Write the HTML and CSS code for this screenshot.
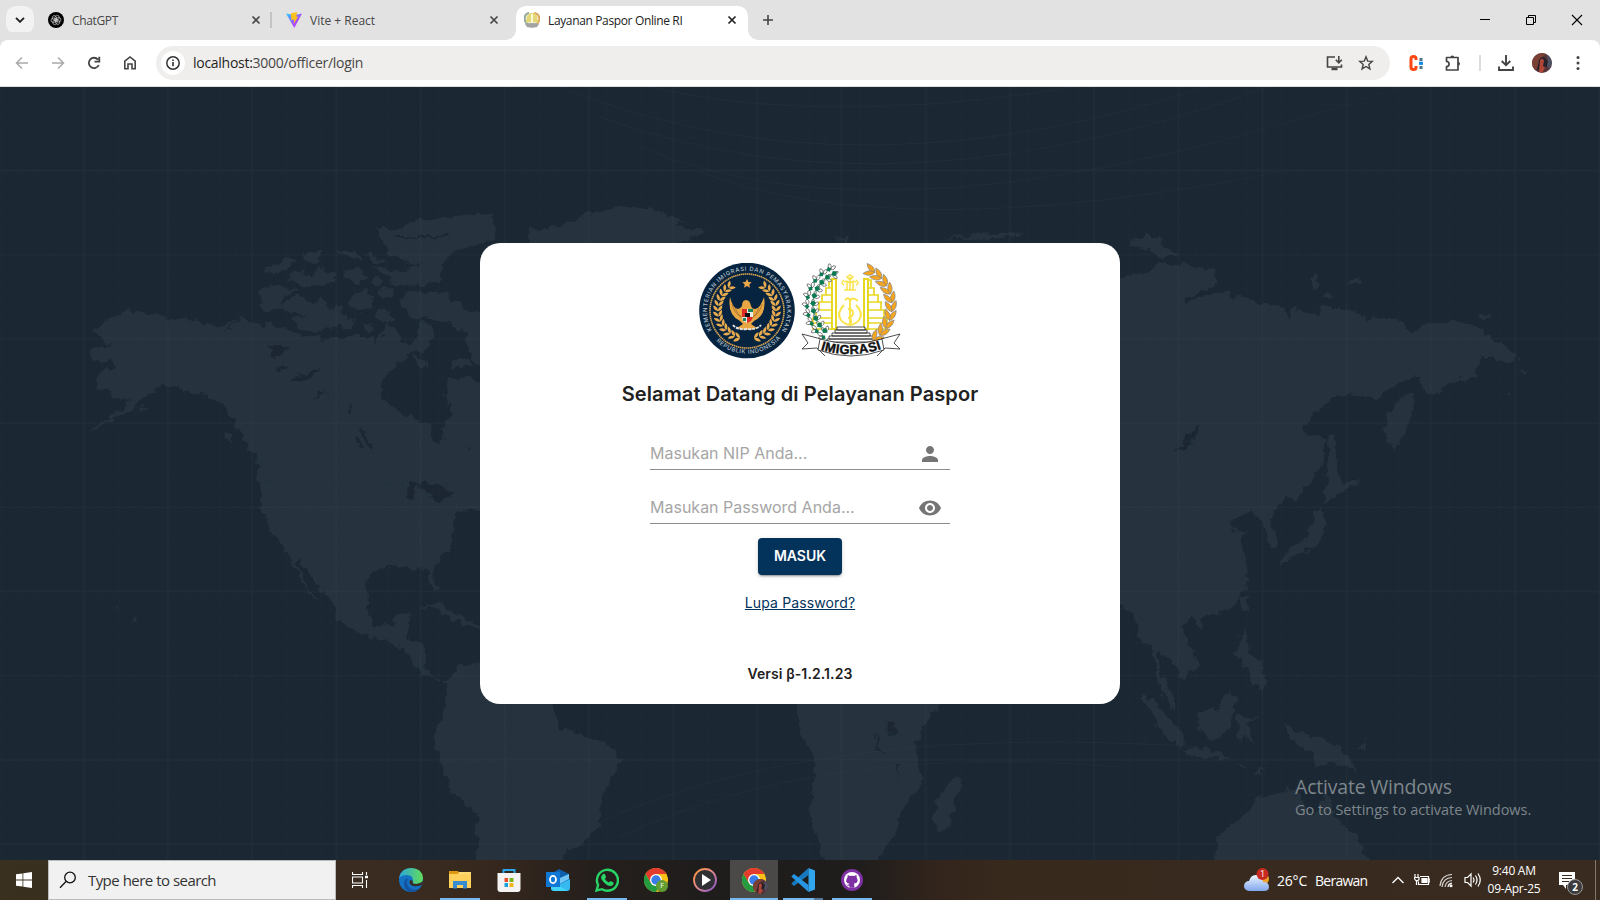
FILE: index.html
```html
<!DOCTYPE html>
<html lang="id">
<head>
<meta charset="utf-8">
<title>Layanan Paspor Online RI</title>
<link rel="stylesheet" href="styles.css">
</head>
<body>
<svg width="0" height="0" class="defs" aria-hidden="true">
  <defs>
    <symbol id="x" viewBox="0 0 10 10"><path d="M1.5 1.5l7 7M8.5 1.5l-7 7" fill="none" stroke="currentColor" stroke-width="1.7"/></symbol>
    <symbol id="chrome" viewBox="0 0 24 24">
      <circle cx="12" cy="12" r="12" fill="#fbc116"/>
      <path d="M1.6 6A12 12 0 0 1 22.4 6H12L6.8 15z" fill="#e33b2e"/>
      <path d="M1.6 6A12 12 0 0 0 12 24L17.2 15 12 17 6.8 15z" fill="#249a41"/>
      <circle cx="12" cy="12" r="6" fill="#fff"/><circle cx="12" cy="12" r="4.7" fill="#3a7de8"/>
    </symbol>
    <symbol id="face" viewBox="0 0 20 20">
      <circle cx="10" cy="10" r="10" fill="#54343a"/>
      <path d="M0 10A10 10 0 0 1 14 1L9 5 5 15 3 17A10 10 0 0 1 0 10z" fill="#7b4034"/>
      <path d="M7 7q2-4 6-2l3 4-1 5-4-1-2 6q-5-1-3-7z" fill="#252229"/>
      <path d="M8 7q3-3 4 1l-1 5 2 2-3 5-3-1z" fill="#b14637"/>
      <path d="M15 2q4 2 5 8l-3 6-2-3 1-5z" fill="#4d5363"/>
    </symbol>
  </defs>
</svg>

<header class="tabs">
  <div class="tab-search"><svg width="10" height="6" viewBox="0 0 10 6"><path d="M1 .8l4 4 4-4" fill="none" stroke="#222" stroke-width="1.9"/></svg></div>
  <div class="tab tab-gpt">
    <svg width="16" height="16" viewBox="0 0 16 16"><circle cx="8" cy="8" r="8" fill="#000"/><g fill="none" stroke="#ddd" stroke-width=".6"><g id="petal"><path d="M7 9V4.600Q8.500 2 11 4V7L8 8.800"/></g><use href="#petal" transform="rotate(60 8 8)"/><use href="#petal" transform="rotate(120 8 8)"/><use href="#petal" transform="rotate(180 8 8)"/><use href="#petal" transform="rotate(240 8 8)"/><use href="#petal" transform="rotate(300 8 8)"/></g></svg>
    <span class="tab-name">ChatGPT</span><svg class="close" width="10" height="10"><use href="#x"/></svg>
  </div>
  <i class="tab-div"></i>
  <div class="tab tab-vite">
    <svg width="16" height="16" viewBox="0 0 16 16"><defs><linearGradient id="vg" x2="1" y2="1"><stop stop-color="#27cfff"/><stop offset=".6" stop-color="#a94dff"/><stop offset="1" stop-color="#c03cff"/></linearGradient></defs><path d="M0 1.5L8 3l8-1.5L8.3 16z" fill="url(#vg)"/><path d="M5 1.2L11.3 0 10 4.8l2.2-.4L7.7 12l.4-4.6-2.8.5z" fill="#ffc01c"/></svg>
    <span class="tab-name">Vite + React</span><svg class="close" width="10" height="10"><use href="#x"/></svg>
  </div>
  <div class="tab tab-active">
    <svg width="16" height="16" viewBox="0 0 16 16"><path d="M5 1Q0 2 .8 8q.6 3.500 4 5" fill="none" stroke="#8fa99b" stroke-width="2"/><path d="M10 1q6 1 5.200 7-.6 3.500-4 5" fill="none" stroke="#dba85c" stroke-width="2"/><path d="M1.800 10.500l1-6.500L6 1h4l3.200 3 1 6.500z" fill="#e3d778"/><path d="M7 2h2v9H7z" fill="#fbf8d8"/><path d="M1 12q7-2 14 0l-2 3q-5 1.500-10 0z" fill="#a3a3a3"/></svg>
    <span class="tab-name">Layanan Paspor Online RI</span><svg class="close" width="10" height="10"><use href="#x"/></svg>
  </div>
  <svg class="plus" width="12" height="12" viewBox="0 0 12 12"><path d="M6 1v10M1 6h10" stroke="#444" stroke-width="1.6"/></svg>
  <div class="winctl">
    <svg width="12" height="12" viewBox="0 0 12 12"><path d="M1 5.500h10" stroke="#000"/></svg>
    <svg width="12" height="12" viewBox="0 0 12 12" fill="none" stroke="#000"><path d="M1.500 3.500h7v7h-7zM3.500 3.500v-2h7v7h-2"/></svg>
    <svg width="12" height="12" viewBox="0 0 12 12"><path d="M1 1l10 10M11 1L1 11" stroke="#000" stroke-width="1.100"/></svg>
  </div>
</header>

<nav class="toolbar">
  <div class="navs">
    <svg width="16" height="16" viewBox="0 0 16 16" fill="none" stroke="#a9a9a9" stroke-width="1.500"><path d="M14 8H3M8 2.500L2.500 8 8 13.500"/></svg>
    <svg width="16" height="16" viewBox="0 0 16 16" fill="none" stroke="#a9a9a9" stroke-width="1.500"><path d="M2 8h11M8 2.500L13.500 8 8 13.500"/></svg>
    <svg width="16" height="16" viewBox="0 0 16 16" fill="none" stroke="#444" stroke-width="1.800"><path d="M12.800 10A5.200 5.200 0 1 1 12 4.600M13.300 1.800V6.600H8.500"/></svg>
    <svg width="16" height="16" viewBox="0 0 16 16" fill="none" stroke="#444" stroke-width="1.600"><path d="M2.800 13.700V6.200L8 2l5.200 4.200v7.500H10V9H6v4.700z"/></svg>
  </div>
  <div class="omni">
    <div class="info"><svg width="16" height="16" viewBox="0 0 16 16"><circle cx="8" cy="8" r="6.200" fill="none" stroke="#333" stroke-width="1.500"/><path d="M8 7v4.200M8 4.600v1.500" stroke="#333" stroke-width="1.600"/></svg></div>
    <span class="url"><b>localhost:</b>3000/officer/login</span>
    <svg width="17" height="16" viewBox="0 0 17 16" fill="none" stroke="#444" stroke-width="1.600"><path d="M9 2H1.500v10h14V9.500M12.800 1v6M9.800 4.800l3 3 3-3"/><path d="M5.500 14h6" stroke-width="2.400"/></svg>
    <svg class="star" width="16" height="16" viewBox="0 0 16 16"><path d="M8 1.800l1.700 4.300 4.600.3-3.500 3 1.100 4.500L8 11.500l-3.900 2.400 1.100-4.500-3.500-3 4.600-.3z" fill="none" stroke="#444" stroke-width="1.400"/></svg>
  </div>
  <div class="exts">
    <svg width="16" height="18" viewBox="0 0 16 18"><path d="M8 6V4.500Q8 2.500 5.500 2.500T3 5v8q0 2.500 2.500 2.500T8 13.500V12" fill="none" stroke="#ff4713" stroke-width="3"/><path d="M13 4v3M13 12v3" stroke="#55708a" stroke-width="3"/><path d="M13 7.700v3.200" stroke="#188ce5" stroke-width="4"/></svg>
    <svg class="puzzle" width="18" height="18" viewBox="0 0 18 18"><path d="M2.500 3.500H14V16H2.500V12.500a2.600 2.600 0 0 0 0-5.200z" fill="none" stroke="#444" stroke-width="1.700" stroke-linejoin="round"/><path d="M6.300 3.500a2 2 0 0 1 4 0zM14 7.800a2 2 0 0 1 0 4z" fill="#444"/></svg>
    <i></i>
    <svg class="dl" width="18" height="18" viewBox="0 0 18 18" fill="none" stroke="#444" stroke-width="1.900"><path d="M9 1v10M4.700 7L9 11.200 13.300 7M2 12.500V16h14v-3.500"/></svg>
    <svg class="ava" width="20" height="20"><use href="#face"/></svg>
    <svg width="4" height="16" viewBox="0 0 4 16" fill="#444"><circle cx="2" cy="2.500" r="1.500"/><circle cx="2" cy="8" r="1.500"/><circle cx="2" cy="13.500" r="1.500"/></svg>
  </div>
</nav>

<main class="page">
  <svg class="map" width="1600" height="773" viewBox="0 0 1600 773">
    <defs>
      <filter id="coast" filterUnits="userSpaceOnUse" x="0" y="0" width="1600" height="773"><feTurbulence type="fractalNoise" baseFrequency=".11" numOctaves="3" seed="4"/><feDisplacementMap in="SourceGraphic" scale="11" xChannelSelector="R" yChannelSelector="G"/></filter>
      <pattern id="minor" width="16.840" height="16.840" patternUnits="userSpaceOnUse"><path d="M0 .5H17M.5 0V17" stroke="#22384a" stroke-opacity=".12"/></pattern>
      <pattern id="major" width="84.200" height="84.200" patternUnits="userSpaceOnUse"><path d="M0 83.500H85M83.500 0V85" stroke="#4d6a70" stroke-opacity=".12"/></pattern>
    </defs>
    <g filter="url(#coast)">
    <g class="land" transform="scale(.5102 .493)">
      <path d="M500 740H960V850L890 868 884 935 850 965 848 985 858 1022 850 1022 836 978 790 972 740 978 720 1000 722 1070 735 1096 770 1090 776 1070 804 1066 796 1120 832 1132 834 1180 852 1205 876 1205 900 1176 940 1166 1080 1240 1096 1300 1140 1312 1190 1332 1215 1366 1205 1395 1182 1430 1176 1490 1155 1525 1110 1550 1100 1575H934L936 1475 890 1435 868 1380 850 1335 856 1300 876 1250 878 1215 850 1198 824 1190 808 1155 760 1122 730 1120 660 1085 656 1050 625 1015 588 955 582 965 600 1010 622 1046 614 1042 590 1000 566 945 530 905 514 860z"/>
      <path d="M826 1056l30-10 30 20 40 20 80 20-30 4-70-20-54-32zM228 1056l5 2-2 3zM258 1078l8 5-5 6zM1562 1250l40-30v120zM1040 292l60-10 50-26 60-12 70 4 60 22-20 12 70 8-40 20-90 30-60 40-160-20z"/>
      <path class="sea" d="M768 780l30-20 16 16 34 12 16 24 28 8-34 22-24-24-22-10-6 34-8-2 4-40z"/>
    </g>
    <g class="land" transform="translate(80 113) scale(.3333)">
      <path d="M90 355L150 333 260 350 360 362 408 388 440 370 495 342 520 365 545 378 570 368 640 395 665 410 720 405 735 430 745 405 800 412 880 410 885 432 895 415 920 375 950 385 965 425 1000 430 1020 370 1060 370 1060 420 1040 445 1000 460 960 490 920 530 900 560 905 595 935 620 980 645 1020 668 1050 670 1055 720 1078 742 1090 720 1085 680 1115 650 1110 610 1095 590 1105 540 1160 530 1240 560V850H545L540 790 500 740 480 690 440 630 400 600 350 575 300 570 255 550 235 560 215 585 180 600 150 630 100 655 60 682 10 705 50 680 90 650 130 630 145 600 100 590 85 570 55 565 40 540 60 515 100 500 95 480 40 480 20 455 45 445 65 435 100 438 60 420 40 395z"/>
      <path d="M550 215L580 190 630 172 650 180 620 210 580 225zM545 265L590 255 650 270 610 295 600 325 560 335 540 315zM600 320L650 285 680 290 690 305 720 290 745 320 775 315 790 345 825 365 815 385 760 380 720 395 650 385 630 355 690 350 630 340zM625 240L645 215 700 225 720 195 740 215 765 220 765 245 680 260zM670 165L720 152 720 175 695 195 675 190zM765 148L830 155 850 180 800 170zM860 155L920 185 900 190 865 175zM785 210L850 205 870 240 830 250 795 235zM810 290L850 265 880 290 875 320 845 335 815 315zM890 265H930L945 285 920 300 890 290zM890 320L940 350 925 375 885 355zM850 370L880 370 880 395 855 390zM885 195L960 215 1030 190 1090 205 1080 245 1020 258 940 255 930 225 890 215zM885 230L910 235 905 255 885 250zM890 90H930L1020 60 1240 40V120L1150 145 1100 170 1090 205 1010 190 930 165 905 120zM960 300L990 275 1110 270 1120 300 1160 330 1240 350V520L1170 480 1160 400 1080 355 1010 360 970 330zM1105 485L1150 470 1180 500 1110 505zM1000 470L1040 485 1050 505 1010 500zM438 695L455 705 460 725 440 715zM500 745L545 765 565 805 550 800 530 770 500 758zM175 620L205 612 190 630z"/>
      <path class="sea" d="M555 438L600 430 625 450 600 470 565 472 580 450zM625 545L665 530 655 510 680 525 720 505 690 540 650 552zM700 605L720 580 745 578zM805 605L812 630 800 640zM825 705L858 750 835 735zM845 685L880 745 875 752 850 710zM590 500H620L610 508zM1155 750L1170 738 1165 750zM940 105H1110V112H940zM435 390L480 352 450 385z"/>
    </g>
    <g class="land" transform="translate(800) scale(.5102 .493)">
      <path d="M600 388L680 378 700 360 750 356 814 372 816 400 760 428 755 435 822 416 888 434 948 448 955 472 968 448 1018 466 1018 444 1060 444 1110 468 1170 466 1200 496 1230 478 1290 476 1340 494 1370 520 1408 546 1400 566 1340 545 1325 560 1328 590 1310 588 1256 610 1254 622 1225 618 1212 588 1180 600 1130 632 1080 626 1044 630 1014 656 986 694 1000 708 1030 712 1024 760 990 816 970 838 950 830 935 856 920 880 935 910 932 930 918 932 915 900 902 872 880 862 846 884 855 902 880 906 862 920 874 954 878 1000 860 1046 820 1070 790 1074 785 1105 765 1075 752 1095 752 1115 774 1140 780 1175 746 1200 740 1180 716 1150 702 1145 702 1175 716 1205 735 1238 736 1270 714 1240 702 1200 690 1130 665 1125 660 1085 635 1058 600 1040z"/>
      <path d="M644 320l30-24 34 14 4 18 34 12-36 8-22-14zM1002 386l10-6 10 22-12 10zM1022 424l14-10 12 14-14 4zM1076 392l20-6 8 12-20 4zM1330 464l14-6 12 8-20 6zM1180 628l18-10 6 42-40 80-20-40 10-40zM1036 706l12-4 4 60 8 40 40-6-60 40-16 10 10-50zM1018 850l14 30-12 46-38 20-38 22 6-26 40-20 18-50zM864 1058l4-24 10-4-6 30zM862 1110l12-10 4 50 28 12 6 60-26-10-10-30-20-30zM668 1230l26 12 26 34 30 30v36l-30-20-30-50zM750 1342l60 2 40 20-90-8zM776 1270l40-10 24-42 14 20-8 50-30 40-28-12zM856 1274l16 6 24-6-22 18 18 46-20-22-8 16zM950 1296l24 12 30 6 56 26 38 52-28-14-30-6-30 6-10-30-40-28zM1090 1344l20-20-2 20zM856 1372l20 6-14 2zM886 1396l30-22-10 18zM815 1575L817 1520 867 1480 897 1444 937 1430 977 1420 990 1460 1010 1480 1030 1425 1050 1480 1090 1520 1114 1575zM-10 1230H290L240 1300 228 1330 238 1420 200 1460 192 1500 150 1575H50L20 1470 30 1360 0 1310zM306 1396l10 14-26 90-20 8-10-30 12-40 20-20zM1400 574l20 8-4 4zM1388 618l8 2-6 4zM60 310l40-4-10 8zM260 306l60-2 20-8 40 2 60-4-20 10-60 6z"/>
      <path class="sea" d="M736 738l24-28 22-28-4 24-26 28zM170 1286h20v24h-20zM150 1300l4 40 14 20-18-14zM190 1370l4 36-6-30z"/>
    </g>
    </g>
    <rect width="1600" height="773" fill="url(#minor)"/><rect width="1600" height="773" fill="url(#major)"/>
    <g class="waves"><path d="M560 0Q860 120 1230 -8M600 30Q900 140 1290 -8M640 60Q900 170 1400 0M700 85Q900 160 1280 85M610 -10Q820 50 1130 -10M600 735Q820 635 1200 660M620 750Q820 655 1120 680"/></g>
  </svg>

  <section class="card">
    <div class="logos">
      <svg width="96" height="96" viewBox="0 0 96 96">
        <defs><path id="arcTop" d="M13.500 68A40 40 0 1 1 82.500 68"/><path id="arcBot" d="M12 72A44 44 0 0 0 84 72"/></defs>
        <circle cx="48" cy="47.500" r="47.800" fill="#06233f"/>
        <text class="seal"><textPath href="#arcTop" textLength="166" startOffset="1">KEMENTERIAN IMIGRASI DAN PEMASYARAKATAN</textPath></text>
        <text class="seal"><textPath href="#arcBot" textLength="72" startOffset="8">REPUBLIK INDONESIA</textPath></text>
        <circle cx="48" cy="48" r="37" fill="none" stroke="#d8a552" stroke-width="1.600" stroke-dasharray="1.500 .5"/>
        <g id="wreath" fill="#e9ab4f"></g>
        <path d="M48 16l1.500 3 3.200.3-2.400 2.200.7 3.200L48 23l-3 1.700.7-3.200-2.400-2.200 3.200-.3z" fill="#eca84a"/>
        <path d="M31 34q-3 18 10 24l3 3-6 4q10 4 20 0l-6-4 3-3q13-6 10-24-4 12-9 12-3 0-4-3-1-6-5-6t-4 6q-2 3-4 3-5 0-8-12z" fill="#e9a744"/>
        <path d="M33 41q2 9 9 13M36 45q3 8 8 10M63 41q-2 9-9 13M60 45q-3 8-8 10" fill="none" stroke="#8d5c22" stroke-width=".6"/>
        <path d="M43 46h5v8h-5zM48 54h6l-2 4-4 2z" fill="#dc2c28"/><path d="M48 46h6v8h-6zM43 54h5v6l-4-2z" fill="#e8eee7"/><path d="M49 46h5v3h-5zM44 55h3v3h-3z" fill="#17835a"/><path d="M46 50h5v4h-5z" fill="#111"/>
        <path d="M34 62q4 5 14 4 10 1 14-4" fill="none" stroke="#e4e4e4" stroke-width="2" stroke-dasharray="3 1"/>
      </svg>
      <svg width="100" height="94" viewBox="0 0 100 94">
        <g fill="none" stroke="#e8d722" stroke-width="2"><path d="M31 16h4v50h-4zM63 16h4v50h-4z"/><path d="M31 17h-3v8h-3v7h-4v7h-3v8h-3v8h-3v11h20M67 17h3v8h3v7h4v7h3v8h3v8h3v11H67M25 25h7M21 32h11M18 39h14M15 47h17M14 55h18M13 60h18M67 25h7M67 32h11M67 39h14M67 47h17M67 55h18M67 60h18" stroke-width="1.700"/></g>
        <g fill="none" stroke="#fae34c" stroke-width="1.500"><path d="M49 14v13M46 18v9M52 18v9M43 27h12M49 20q-3-3-6-1M49 20q3-3 6-1M43 17q-4 3 0 5M55 17q4 3 0 5M46 14l3-2 3 2-3 3z"/><path d="M43 42q-8 8-3 15 3 4 9 5 6-1 9-5 5-7-3-15M49 38v24M44 37q4-4 5 1 2-5 8 0M47 46q5 0 5 4t-5 5q4 0 3 5" stroke-width="2"/></g>
        <g fill="#fff" stroke="#222" stroke-width=".8"><path d="M36 64h28v3H36zM34 67h32v3H34zM31 70h38v3H31zM28 73h44v3H28zM26 76h48v3H26z"/></g>
        <g id="cotton"></g><g id="rice"></g>
        <g fill="#fff" stroke="#222" stroke-width=".8"><path d="M20 76L1 71l6 9-6 6 15-1 8 8M80 76l19-5-6 9 6 6-15-1-8 8"/><path d="M19 76q31 9 62 0l2 11q-33 12-66 0z"/></g>
        <path id="ribbon" d="M18.500 86.500q31 10 63-1" fill="none"/>
        <text class="ribbon-text"><textPath href="#ribbon" textLength="62" startOffset="1">IMIGRASI</textPath></text>
      </svg>
    </div>
    <h1>Selamat Datang di Pelayanan Paspor</h1>
    <div class="field"><span>Masukan NIP Anda...</span><svg width="24" height="24" viewBox="0 0 24 24" fill="#757575"><path d="M12 12c2.210 0 4-1.790 4-4s-1.790-4-4-4-4 1.790-4 4 1.790 4 4 4m0 2c-2.670 0-8 1.340-8 4v2h16v-2c0-2.660-5.330-4-8-4"/></svg></div>
    <div class="field second"><span>Masukan Password Anda...</span><svg width="24" height="24" viewBox="0 0 24 24" fill="#757575"><path d="M12 4.500C7 4.500 2.730 7.610 1 12c1.730 4.390 6 7.500 11 7.500s9.270-3.110 11-7.500c-1.730-4.390-6-7.500-11-7.500M12 17c-2.760 0-5-2.240-5-5s2.240-5 5-5 5 2.240 5 5-2.240 5-5 5m0-8c-1.660 0-3 1.340-3 3s1.340 3 3 3 3-1.340 3-3-1.340-3-3-3"/></svg></div>
    <button class="login">MASUK</button>
    <a class="forgot">Lupa Password?</a>
    <p class="version">Versi β-1.2.1.23</p>
  </section>
  <div class="activate"><div class="act1">Activate Windows</div><div class="act2">Go to Settings to activate Windows.</div></div>
</main>

<footer class="taskbar">
  <div class="start"><svg width="16" height="16" viewBox="0 0 16 16" fill="#fff"><path d="M0 2.300L6.500 1.400v6.200H0zM7.300 1.300L16 0v7.600H7.300zM0 8.400h6.500v6.200L0 13.700zM7.300 8.400H16V16l-8.700-1.300z"/></svg></div>
  <div class="search"><svg width="18" height="18" viewBox="0 0 18 18" fill="none" stroke="#111" stroke-width="1.300"><circle cx="11" cy="6.500" r="5.300"/><path d="M7 10.500L1 16.700"/></svg><span>Type here to search</span></div>
  <div class="taskview"><svg width="16" height="16" viewBox="0 0 16 16" fill="none" stroke="#fff" stroke-width="1.100"><path d="M.5 0v2.500h10V0M.5 16v-2.500h10V16M.5 5h10v6H.5zM14.500 0v3M14.500 8v8"/><path d="M13 5h3" stroke-width="2.500"/></svg></div>
  <div class="apps">
    <div class="app"><svg width="24" height="24" viewBox="0 0 24 24"><defs><linearGradient id="e1" x2="1"><stop stop-color="#2aa5dc"/><stop offset="1" stop-color="#62dd59"/></linearGradient></defs><circle cx="12" cy="12" r="12" fill="#1472c4"/><path d="M0 10Q2 0 12 0q11 0 12 10 0 6-7 6-5 0-3-3Q14 7 8 7 3 7 0 10z" fill="url(#e1)"/><path d="M9 10q-3 7 3 11 6 2 10-2-5 5-10 5Q4 22 5 14q1-3 4-4z" fill="#1452a2"/><path d="M14 13q-2 3 3 3 4 0 7-3l-1 4q-6 2-9 1-5-2-3-6z" fill="#3a2c21"/></svg></div>
    <div class="app run"><svg width="24" height="24" viewBox="0 0 24 24"><path d="M1 3h9l2 3H1z" fill="#dd9911"/><path d="M1 6h22v14H1z" fill="#ffd15c"/><path d="M11 4h12v2H10z" fill="#ffdb77"/><path d="M5 20.500V13h14v7.500h-4V17H9v3.500z" fill="#378bd0"/></svg></div>
    <div class="app"><svg width="24" height="24" viewBox="0 0 24 24"><path d="M6.500 6V2h11v4" fill="none" stroke="#28a7ec" stroke-width="2"/><path d="M.5 5h23v16q0 3-3 3h-17q-3 0-3-3z" fill="#f3f3f3"/><path d="M7.500 10H11v4H7.500z" fill="#e74b2b"/><path d="M12.500 10h4v4h-4z" fill="#7eb41f"/><path d="M7.500 15H11v4H7.500z" fill="#18a0dd"/><path d="M12.500 15h4v4h-4z" fill="#f3b51e"/></svg></div>
    <div class="app"><svg width="24" height="24" viewBox="0 0 24 24"><path d="M5 6l8-5 10 5v16H5z" fill="#0e60ad"/><path d="M14 10l9-4v5L12 17z" fill="#6fc5f5"/><path d="M5 21l19-10v9q0 3-3 3H8z" fill="#35b9ef"/><path d="M5 13l17 10H8q-3 0-3-3z" fill="#43d4fa"/><path d="M0 4h14v15H0z" fill="#0f78d4"/><ellipse cx="7" cy="11.500" rx="3" ry="3.600" fill="none" stroke="#fff" stroke-width="1.800"/></svg></div>
    <div class="app run"><svg width="24" height="24" viewBox="0 0 24 24"><path d="M1.500 22.500l1.600-5.500A10.500 10.500 0 1 1 7 21.200z" fill="none" stroke="#28d366" stroke-width="2.400"/><path d="M8 6q2-1 2.700 2l.3 1.500-1.200 1.500q2 3 4.200 3.500l1.500-1.600 3 1.600q.5 2.500-2.500 3.500-3 .5-7-3.500T6.500 8z" fill="#28d366"/></svg></div>
    <div class="app"><svg width="24" height="24"><use href="#chrome"/></svg><b class="green">F</b></div>
    <div class="app"><svg width="24" height="24" viewBox="0 0 24 24"><defs><linearGradient id="m" x2="1" y2="1"><stop stop-color="#ff9838"/><stop offset=".5" stop-color="#df8790"/><stop offset="1" stop-color="#8554cf"/></linearGradient></defs><circle cx="12" cy="12" r="11" fill="#303034" stroke="url(#m)" stroke-width="1.800"/><path d="M9 6l9 6-9 6z" fill="#fff"/></svg></div>
    <div class="app run active"><svg width="24" height="24"><use href="#chrome"/></svg><svg class="mini" width="15" height="15"><use href="#face"/></svg></div>
    <div class="app run multi"><svg width="24" height="24" viewBox="0 0 24 24"><path d="M17.500 0v7L3 18 .3 15.500z" fill="#1679c0"/><path d="M17.500 24v-7L3 6 .3 8.500z" fill="#2696e2"/><path d="M17.500 0L24 2.500v19L17.500 24z" fill="#2fa6ee"/></svg></div>
    <div class="app run"><svg width="24" height="24" viewBox="0 0 24 24"><circle cx="12" cy="12" r="11" fill="#7e31a2"/><circle cx="12" cy="12" r="8" fill="#fff"/><path d="M7.800 7l2 1q2-.5 4.500 0l2-1q.6 1 .3 2.200 3 5.500-2.600 6.400l.5 4.200h-5v-2q-2.300.4-3-1.600l1.500.7 1.500-1.200Q4 15 7.500 9.200z" fill="#7e31a2"/></svg></div>
  </div>
  <div class="weather"><svg width="26" height="26" viewBox="0 0 26 26"><defs><linearGradient id="cl" x2="0" y2="1"><stop stop-color="#eef5ff"/><stop offset="1" stop-color="#81a7ed"/></linearGradient></defs><circle cx="19" cy="12" r="6" fill="#efa22b"/><path d="M5 24a5 5 0 0 1 0-10Q7 7 13 8q6 1 6 7 6 0 6 5 0 4-5 4z" fill="url(#cl)"/><circle cx="18.500" cy="7" r="6" fill="#c72a20"/></svg><b>1</b><span>26°C</span><span class="sky">Berawan</span></div>
  <div class="tray">
    <svg width="14" height="16" viewBox="0 0 14 16"><path d="M1.500 11L7 5.500l5.500 5.500" fill="none" stroke="#fff" stroke-width="1.300"/></svg>
    <svg width="16" height="16" viewBox="0 0 16 16" fill="none" stroke="#fff" stroke-width="1.200"><path d="M6 4.500h8.500v8H4.500v-3M14.500 7H16v3h-1.500M1 2v3M4 2v3M0 5.500h5v2q-2.500 3-4 0zM2.500 8v5"/><path d="M8 6.500h5v4H8z" fill="#fff"/></svg>
    <svg width="16" height="16" viewBox="0 0 16 16" fill="none" stroke="#fff" stroke-width="1.200"><path d="M3 15Q4 6 13 5.500M6 15q1-6 7-6.500M1 14Q2 3 13 2.500" opacity=".8"/><path d="M9 15q.5-3.500 4-3.800"/><circle cx="12" cy="13.800" r="1.500" fill="#fff" stroke="none"/></svg>
    <svg width="18" height="16" viewBox="0 0 18 16" fill="none" stroke="#fff" stroke-width="1.200"><path d="M1 5.500h2.500L7 2v12l-3.500-3.500H1zM9 5.500q2 2.500 0 5M11.500 3.500q3 4.500 0 9M14 1.500q4.500 6.500 0 13"/></svg>
  </div>
  <div class="clock"><div class="time">9:40 AM</div><div class="date">09-Apr-25</div></div>
  <div class="notif"><svg width="17" height="17" viewBox="0 0 17 17"><path d="M0 0h16v13H7v4l-3-4H0z" fill="#fff"/><path d="M3 3.500h10M3 6.500h10M3 9.500h7" stroke="#3a2c21" stroke-width="1.100"/></svg><b>2</b></div>
  <i class="peek"></i>
</footer>
<script src="emblems.js"></script>
</body>
</html>
```

FILE: styles.css
```css
*{box-sizing:border-box}
body{margin:0;width:1600px;height:900px;overflow:hidden;display:flex;flex-direction:column;font-family:"Open Sans","Noto Sans",sans-serif;background:#fff}
svg{display:block;flex:none}
.defs{position:absolute}
.tabs{height:40px;background:#e2e2e2;display:flex;align-items:flex-start;padding:6px 0 0 6px;flex:none}
.tab-search{width:28px;height:28px;border-radius:10px;background:#f2f2f2;display:flex;align-items:center;justify-content:center}
.tab{display:flex;align-items:center;height:28px;font-size:12px;letter-spacing:-.36px;color:#474747}
.tab-name{flex:1;margin-left:8px;white-space:nowrap}
.tab-gpt{width:213px;margin-left:14px}
.tab-div{width:2px;height:16px;background:#c4c4c4;margin:6px 0 0 9px}
.tab-vite{width:213px;margin-left:14px;letter-spacing:0}
.tab-active{width:232px;height:34px;background:#fff;border-radius:10px 10px 0 0;margin-left:17px;padding:0 11px 6px 8px;color:#222;position:relative}
.tab-active::before,.tab-active::after{content:"";position:absolute;bottom:0;width:10px;height:10px}
.tab-active::before{left:-10px;background:radial-gradient(circle at 0 0,#e2e2e2 9.5px,#fff 10px)}
.tab-active::after{right:-10px;background:radial-gradient(circle at 10px 0,#e2e2e2 9.500px,#fff 10px)}
.plus{margin:8px 0 0 14px}
.winctl{display:flex;gap:34px;margin:8px 17px 0 auto}
.toolbar{height:47px;flex:none;background:#fff;border-bottom:1px solid #dedede;border-radius:8px 8px 0 0;box-shadow:0 -8px 0 #e2e2e2;display:flex;align-items:center;padding-left:14px}
.navs{display:flex;gap:20px}
.omni{display:flex;align-items:center;width:1234px;height:34px;margin-left:18px;border-radius:17px;background:#efeeec;padding:0 16px 0 5px}
.info{width:24px;height:24px;border-radius:50%;background:#fff;display:flex;align-items:center;justify-content:center}
.url{font-size:14px;letter-spacing:-.28px;color:#474747;flex:1;margin:-1px 0 0 8px}
.url b{font-weight:400;color:#1f1f1f}
.star{margin-left:15px}
.exts{display:flex;align-items:center;margin-left:18px}
.exts i{width:2px;height:16px;background:#dcdcdc;margin-left:17px}
.puzzle{margin-left:20px}.dl{margin-left:16px}.ava{margin:0 24px 0 17px}
.page{position:relative;height:773px;flex:none;background:#1b2732;display:flex;justify-content:center;align-items:flex-start}
.map{position:absolute;left:0;top:0}
.land path{fill:#25323d}.land .sea{fill:#1b2732}
.waves path{fill:none;stroke:#2f5261;stroke-opacity:.16}
.card{position:relative;width:640px;height:461px;margin-top:156px;border-radius:20px;background:#fff;display:flex;flex-direction:column;align-items:center;font-family:Inter,sans-serif;padding-top:20px;color:#212121}
.logos{display:flex;gap:6px;height:96px}
.seal{font:500 5.800px Inter,sans-serif;fill:#b5c0ca}
.ribbon-text{font:900 13px "Liberation Sans",sans-serif;fill:#111;stroke:#111;stroke-width:.4}
h1{margin:19px 0 0;font-size:20px;line-height:32px;font-weight:600;letter-spacing:.1px;white-space:nowrap}
.field{width:300px;height:32px;margin-top:28px;border-bottom:1px solid #8d8d8d;display:flex;justify-content:space-between;align-items:center;padding:0 8px 1px 0;font-size:16px;color:#a6a6a6}
.field svg{margin-top:2px}
.second{margin-top:22px}
.login{width:84px;height:37px;margin:14px 0 0;border:0;border-radius:4px;background:#03335a;color:#fff;font:600 14px/24px Inter,sans-serif;box-shadow:0 3px 1px -2px rgba(0,0,0,.2),0 2px 2px rgba(0,0,0,.14),0 1px 5px rgba(0,0,0,.12);padding:0 0 1px}
.forgot{margin-top:17px;font-size:14px;line-height:22px;letter-spacing:.12px;color:#03335a;text-decoration:underline}
.version{margin:49px 0 0;font-size:14px;line-height:22px;font-weight:600;letter-spacing:.1px}
.activate{position:absolute;left:1295px;top:687px;color:#7d868c;white-space:nowrap}
.act1{font-size:19.500px;line-height:26px;letter-spacing:-.2px}
.act2{font-size:14.500px;line-height:20px;letter-spacing:-.04px}
.taskbar{height:40px;flex:none;display:flex;color:#fff;background:linear-gradient(90deg,#39301f 0,#3a2b20 430px,#35271d 500px,#251f1c 590px,#1f1d1c 700px,#1f1d1c 860px,#33251c 940px,#38291d 1000px,#392b20)}
.start{width:48px;display:flex;align-items:center;justify-content:center}
.search{width:288px;background:#f1f1f1;border:1px solid #bbb;color:#333;display:flex;align-items:center;font-size:15px}
.search svg{margin:0 11px 0 10px}
.search span{letter-spacing:-.58px;word-spacing:.3px}
.taskview{width:51px;padding:12px 0 0 16px}
.apps{display:flex;gap:1px}
.app{position:relative;width:48px;height:40px;display:flex;align-items:center;justify-content:center}
.run::after{content:"";position:absolute;left:4px;right:4px;bottom:0;height:2px;background:#77b8ef}
.active{background:#4b4948}.active::after{left:0;right:0}
.multi::after{background:linear-gradient(90deg,#77b8ef 31px,#54799d 31px)}
.green{position:absolute;left:24px;top:20px;width:12px;height:12px;border-radius:50%;background:#629c32;font-size:7px;line-height:12px;text-align:center;font-weight:400}
.mini{position:absolute;left:23px;top:19px}
.weather{position:relative;display:flex;align-items:center;margin-left:368px;font-size:14px;letter-spacing:-.2px;white-space:nowrap}
.weather b{position:absolute;left:16px;top:8px;font-size:9px;line-height:12px;font-weight:400}
.weather span{margin-left:7px}.weather .sky{margin-left:8px;letter-spacing:-.75px}
.tray{position:absolute;left:1391px;top:872px;display:flex;gap:9px}
.clock{position:absolute;left:1480px;top:862px;width:68px;text-align:center;font-size:12px;line-height:18px;letter-spacing:-.25px}
.notif{position:absolute;left:1559px;top:872px}
.notif b{position:absolute;left:8px;top:7px;width:16px;height:16px;border-radius:50%;background:#3c3c3c;border:1px solid #999;font-size:10px;line-height:14px;text-align:center}
.peek{position:absolute;left:1595px;top:860px;width:1px;height:40px;background:#80786f}
```

FILE: emblems.js
```js
// Repeated leaves of the two emblems.
const NS = "http://www.w3.org/2000/svg";
function leaf(parent, d, transform, fill, stroke) {
  const p = document.createElementNS(NS, "path");
  p.setAttribute("d", d);
  p.setAttribute("transform", transform);
  if (fill) p.setAttribute("fill", fill);
  if (stroke) { p.setAttribute("stroke", stroke); p.setAttribute("stroke-width", ".7"); }
  parent.appendChild(p);
}
function onArc(cx, cy, r, deg) {
  const a = deg * Math.PI / 180;
  return `${cx + Math.cos(a) * r} ${cy + Math.sin(a) * r}`;
}

// Gold wreath: pairs of leaves pointing up along each side.
const wreath = document.getElementById("wreath");
const grain = "M0 0Q-3-3.500 0-7.500Q3-3.500 0 0z";
for (let i = 0; i < 13; i++) {
  const a = 76 - i * 10.500;
  for (const mirror of ["", "translate(96 0) scale(-1 1) "]) {
    leaf(wreath, grain, `${mirror}translate(${onArc(48, 47, 29, a)}) rotate(${a + 38})`);
    leaf(wreath, grain, `${mirror}translate(${onArc(48, 47, 29, a)}) rotate(${a - 38})`);
  }
}

// Cotton branch: two bolls and a green calyx at each step.
const cotton = document.getElementById("cotton");
const boll = "M0 0Q-4.500-1-3.500-5Q0-5.500 0 0Q0-5.500 3.500-5Q4.500-1 0 0z";
for (let i = 0; i < 10; i++) {
  const a = 128 + i * 13;
  leaf(cotton, boll, `translate(${onArc(46, 42, 39, a)}) rotate(${a + 135})`, "#fff", "#555");
  leaf(cotton, boll, `translate(${onArc(46, 42, 34, a)}) rotate(${a + 215})`, "#fff", "#555");
  leaf(cotton, "M-3 0L0-3.500 3 0 0 3z", `translate(${onArc(46, 42, 34, a + 3)}) rotate(${a})`, "#0b7a50");
  leaf(cotton, "M-2.500 0L0-2.500 2.500 0 0 2.500z", `translate(${onArc(46, 42, 40, a - 2)}) rotate(${a})`, "#0b7a50");
}

// Rice ear: long overlapping grains.
const rice = document.getElementById("rice");
const husk = "M0 0Q-4.500-5 0-12Q4.500-5 0 0z";
for (let i = 0; i < 10; i++) {
  const a = 58 - i * 12.500;
  leaf(rice, husk, `translate(${onArc(50, 43, 41, a)}) rotate(${a + 14})`, "#f7a51d", "#858585");
  leaf(rice, husk, `translate(${onArc(50, 43, 41, a)}) rotate(${a - 40})`, "#f7a51d", "#858585");
}
```
